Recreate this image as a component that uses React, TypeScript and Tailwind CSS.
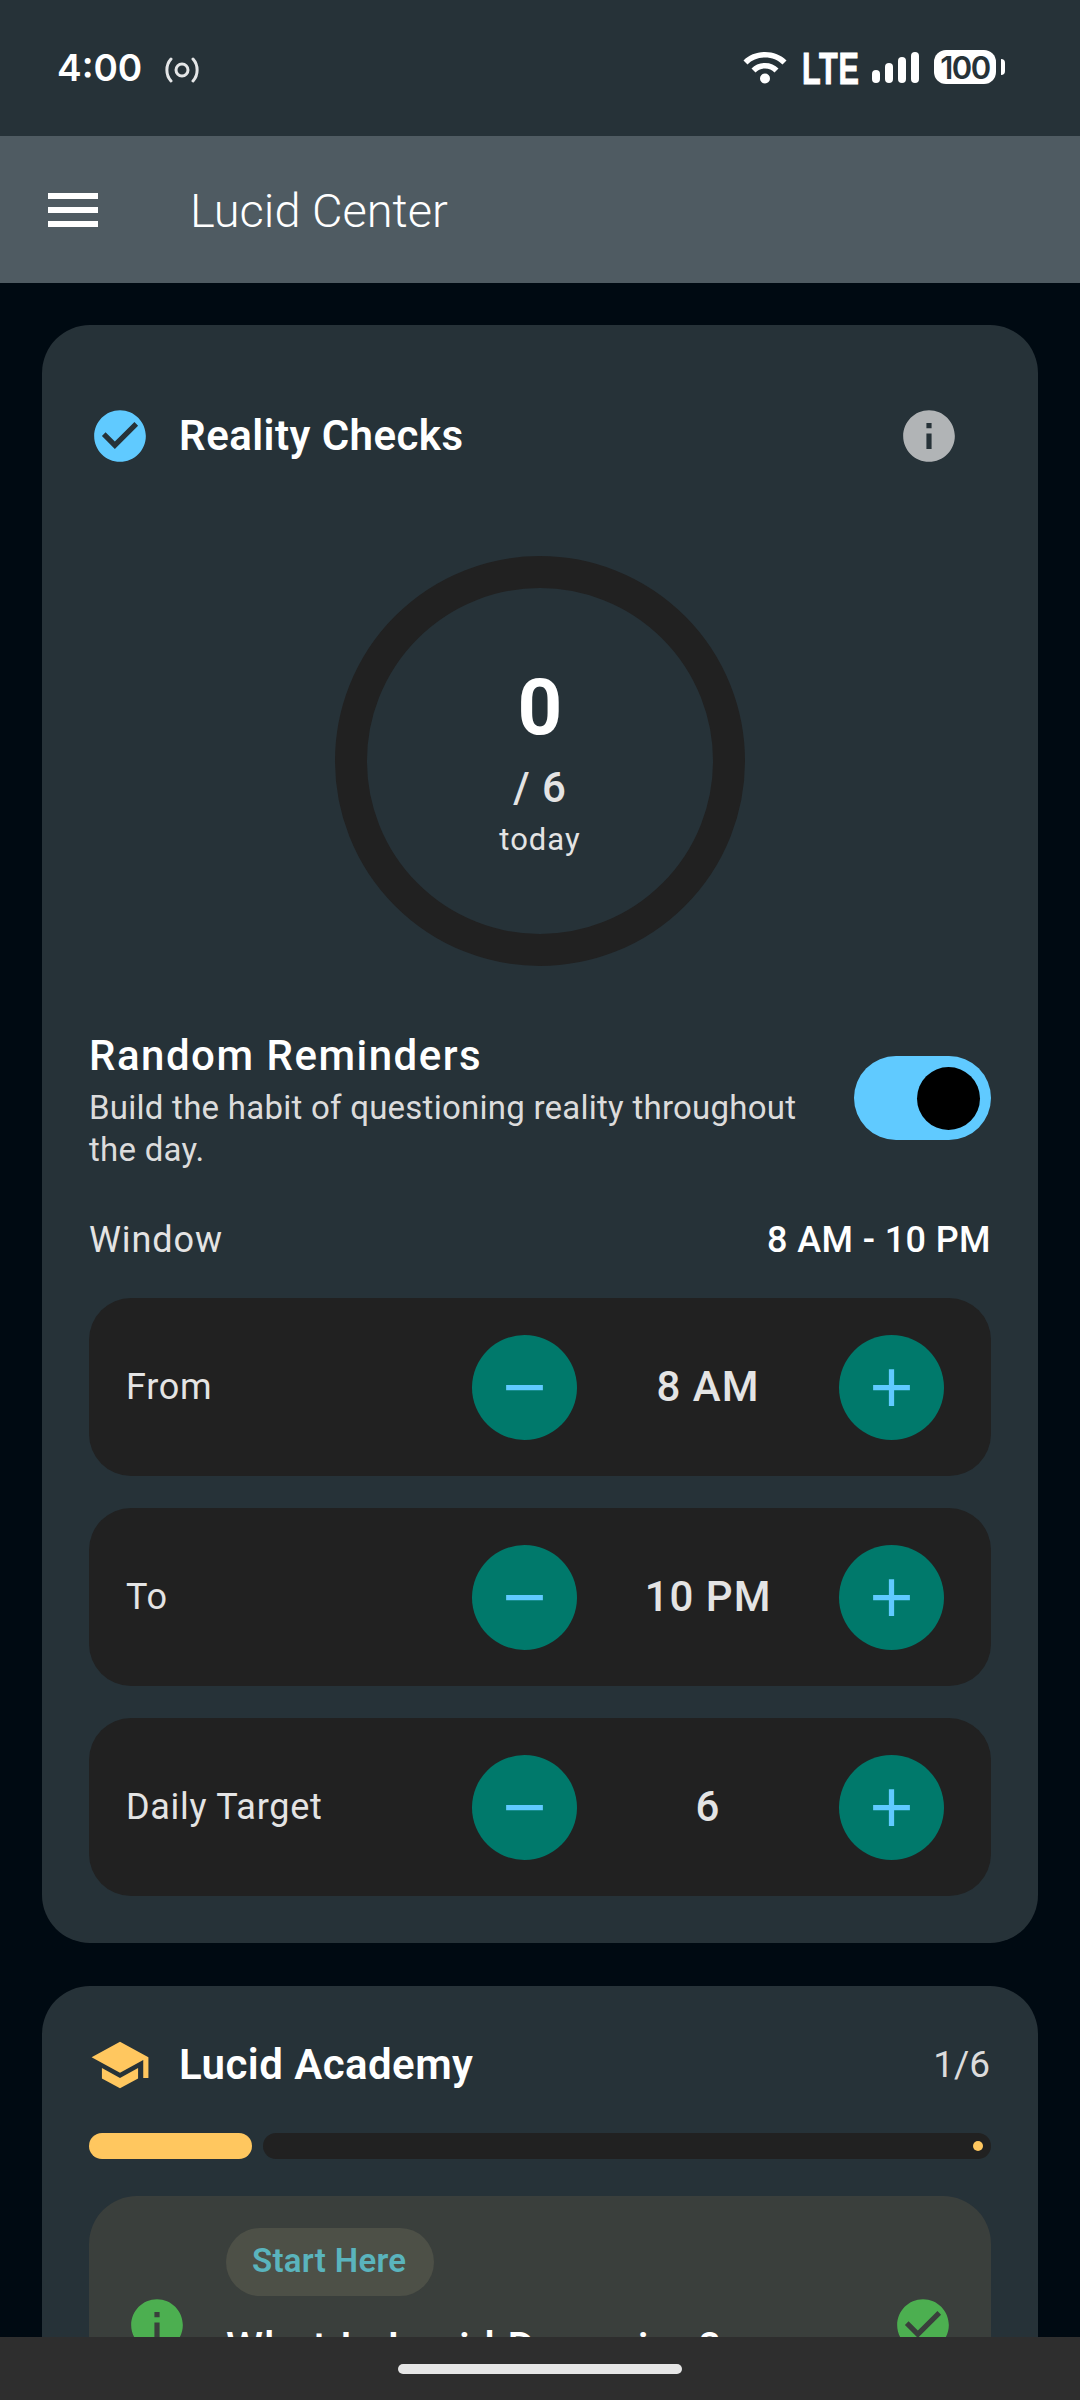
const ACCENT = "#60caff";

function StatusBar() {
  return (
    <div className="relative flex h-[136px] shrink-0 items-start bg-[#263238] pl-[57px] pr-[75px] pt-[46px] text-white">
      <span className="w-[108px] text-[37px] font-semibold leading-[44px] [font-family:Inter,sans-serif]">4:00</span>
      <svg className="mt-[11px] h-[26px] w-[34px]" viewBox="0 0 34 26" fill="none" stroke="#e4e6e7" strokeWidth="3">
        <circle cx="17" cy="13" r="6" />
        <path d="M6 2C0.5 8 0.5 18 6 24M28 2C33.5 8 33.5 18 28 24" strokeLinecap="round" />
      </svg>
      <div className="ml-auto mt-[6px] flex items-start">
        <svg className="h-[32px] w-[44px]" viewBox="0 0 44 32" fill="white">
          <path d="M22 0C13.5 0 6 3 0.5 8.5L4.5 12.5C9 8 15 5.5 22 5.5S35 8 39.5 12.5L43.5 8.5C38 3 30.5 0 22 0Z" />
          <path d="M22 11C16.5 11 12 13 8.5 16.5L12.5 20.5C15 18 18 16.5 22 16.5S29 18 31.5 20.5L35.5 16.5C32 13 27.500 11 22 11Z" />
          <circle cx="22" cy="26.500" r="5" />
        </svg>
        <span className="ml-[15px] inline-block w-[54px] origin-left scale-x-[0.68] text-[45px] font-bold leading-[33px] tracking-[1px] [-webkit-text-stroke:1px_white] [font-family:'Liberation_Sans',sans-serif]">LTE</span>
        <div className="ml-[16px] flex h-[31px] items-end gap-[5px]">
          <span className="h-[13px] w-[8px] rounded-full bg-white" />
          <span className="h-[20px] w-[8px] rounded-full bg-white" />
          <span className="h-[26px] w-[8px] rounded-full bg-white" />
          <span className="h-[31px] w-[8px] rounded-full bg-white" />
        </div>
        <div className="ml-[15px] mt-[-2px] flex h-[34px] w-[62px] items-center justify-center rounded-[12px] bg-white text-[31px] font-semibold leading-none tracking-[-1.500px] text-[#263238] [font-family:Inter,sans-serif]">
          100
        </div>
        <span className="ml-[5px] mt-[7px] h-[16px] w-[4px] rounded-r-full bg-white" />
      </div>
    </div>
  );
}

function AppBar() {
  return (
    <div className="flex h-[147px] shrink-0 items-center bg-[#4f5b62] pl-[48px]">
      <div className="flex w-[142px] flex-col gap-[8px]">
        <span className="h-[6px] w-[50px] bg-white" />
        <span className="h-[6px] w-[50px] bg-white" />
        <span className="h-[6px] w-[50px] bg-white" />
      </div>
      <span className="mt-[2px] text-[47px] font-light leading-none text-white">Lucid Center</span>
    </div>
  );
}

function Icon({ d, color, className }: { d: string; color: string; className?: string }) {
  return (
    <svg className={`h-[62px] w-[62px] shrink-0 ${className ?? ""}`} viewBox="0 0 24 24" fill={color}>
      <path d={d} />
    </svg>
  );
}

const CHECK_CIRCLE =
  "M12 2C6.48 2 2 6.48 2 12s4.48 10 10 10 10-4.48 10-10S17.52 2 12 2zm-2 15l-5-5 1.41-1.41L10 14.17l7.59-7.59L19 8l-9 9z";
const INFO =
  "M12 2C6.48 2 2 6.48 2 12s4.48 10 10 10 10-4.48 10-10S17.52 2 12 2zm1 15h-2v-6h2v6zm0-8h-2V7h2v2z";
const SCHOOL = "M5 13.18v4L12 21l7-3.82v-4L12 17l-7-3.82zM12 3L1 9l11 6 9-4.91V17h2V9L12 3z";

function RoundButton({ d }: { d: string }) {
  return (
    <div className="flex h-[105px] w-[105px] shrink-0 items-center justify-center rounded-full bg-[#00796b]">
      <svg className="h-[63px] w-[63px]" viewBox="0 0 24 24" fill={ACCENT}>
        <path d={d} />
      </svg>
    </div>
  );
}

function Stepper({ label, value }: { label: string; value: string }) {
  return (
    <div className="flex h-[178px] items-center rounded-[42px] bg-[#212121] pl-[37px] pr-[47px]">
      <span className="flex-1 text-[36px] leading-[44px] tracking-[0.7px] text-[#e4e4e4]">{label}</span>
      <RoundButton d="M19 13H5v-2h14v2z" />
      <span className="w-[262px] text-center text-[42px] font-medium leading-[46px] tracking-[1px] text-[#e4e4e4]">
        {value}
      </span>
      <RoundButton d="M19 13h-6v6h-2v-6H5v-2h6V5h2v6h6v2z" />
    </div>
  );
}

function RealityChecks() {
  return (
    <section className="rounded-[48px] bg-[#263238] px-[47px] pb-[47px] pt-[80px]">
      <div className="flex items-center gap-[28px]">
        <Icon d={CHECK_CIRCLE} color={ACCENT} />
        <h2 className="text-[42px] font-semibold leading-[52px] tracking-[0.45px] text-white">Reality Checks</h2>
        <Icon d={INFO} color="#b1b4b6" className="ml-auto mr-[31px]" />
      </div>
      <div className="mx-auto mt-[89px] flex h-[410px] w-[410px] flex-col items-center rounded-full border-[32px] border-[#212121] pt-[75px]">
        <span className="text-[78px] font-bold leading-[90px] text-white">0</span>
        <span className="mt-[10px] text-[42px] font-medium leading-[50px] tracking-[1px] text-[#e4e4e4]">/ 6</span>
        <span className="mt-[9px] text-[31px] leading-[36px] tracking-[1px] text-[#e4e4e4]">today</span>
      </div>
      <div className="mt-[65px] flex items-start">
        <div className="flex-1 pr-[34px]">
          <h3 className="text-[42px] font-medium leading-[50px] tracking-[1.5px] text-white">Random Reminders</h3>
          <p className="mt-[6px] text-[33px] leading-[42px] tracking-[0.25px] text-[#dcdcdc]">
            Build the habit of questioning reality throughout the day.
          </p>
        </div>
        <div className="mt-[25px] flex h-[84px] w-[137px] shrink-0 items-center justify-end rounded-full bg-[#60caff] pr-[11px]">
          <span className="h-[63px] w-[63px] rounded-full bg-black" />
        </div>
      </div>
      <div className="mt-[47px] flex items-center justify-between leading-[44px]">
        <span className="text-[36px] tracking-[0.9px] text-[#e4e4e4]">Window</span>
        <span className="text-[36px] font-medium tracking-[0.4px] text-white">8 AM - 10 PM</span>
      </div>
      <div className="mt-[36px] flex flex-col gap-[32px]">
        <Stepper label="From" value="8 AM" />
        <Stepper label="To" value="10 PM" />
        <Stepper label="Daily Target" value="6" />
      </div>
    </section>
  );
}

function LucidAcademy() {
  return (
    <section className="mt-[43px] rounded-[48px] bg-[#263238] px-[47px] pb-[46px] pt-[48px]">
      <div className="flex items-center gap-[28px]">
        <Icon d={SCHOOL} color="#ffc75f" />
        <h2 className="text-[42px] font-semibold leading-[52px] tracking-[0.45px] text-white">Lucid Academy</h2>
        <span className="ml-auto mr-[1px] text-[37px] leading-[44px] text-[#dcdcdc]">1/6</span>
      </div>
      <div className="mt-[37px] flex h-[26px] gap-[11px]">
        <div className="w-[163px] rounded-full bg-[#ffc75f]" />
        <div className="flex flex-1 items-center justify-end rounded-full bg-[#212121] pr-[8px]">
          <span className="h-[10px] w-[10px] rounded-full bg-[#ffc75f]" />
        </div>
      </div>
      <div className="mt-[37px] flex rounded-[48px] bg-[#3a3f3c] px-[37px] pb-[40px] pt-[32px]">
        <Icon d={INFO} color="#4caf50" className="mt-[66px]" />
        <div className="flex-1 pl-[38px]">
          <span className="inline-block h-[68px] rounded-full bg-[#4d5047] pl-[26px] pr-[28px] text-[33px] font-semibold leading-[66px] tracking-[0.3px] text-[#5ab4bd]">
            Start Here
          </span>
          <h3 className="mt-[27px] text-[42px] font-medium leading-[50px] tracking-[1.3px] text-white">What Is Lucid Dreaming?</h3>
        </div>
        <Icon d={CHECK_CIRCLE} color="#4caf50" className="mt-[66px]" />
      </div>
    </section>
  );
}

export default function App() {
  return (
    <div className="flex h-[2400px] w-[1080px] flex-col overflow-hidden bg-[#000a12] [font-family:Roboto,sans-serif]">
      <StatusBar />
      <AppBar />
      <main className="min-h-0 flex-1 overflow-hidden px-[42px] pt-[42px]">
        <RealityChecks />
        <LucidAcademy />
      </main>
      <div className="flex h-[63px] shrink-0 justify-center bg-[#2e2e2e] pt-[27px]">
        <span className="h-[10px] w-[284px] rounded-full bg-[#e6e6e6]" />
      </div>
    </div>
  );
}
